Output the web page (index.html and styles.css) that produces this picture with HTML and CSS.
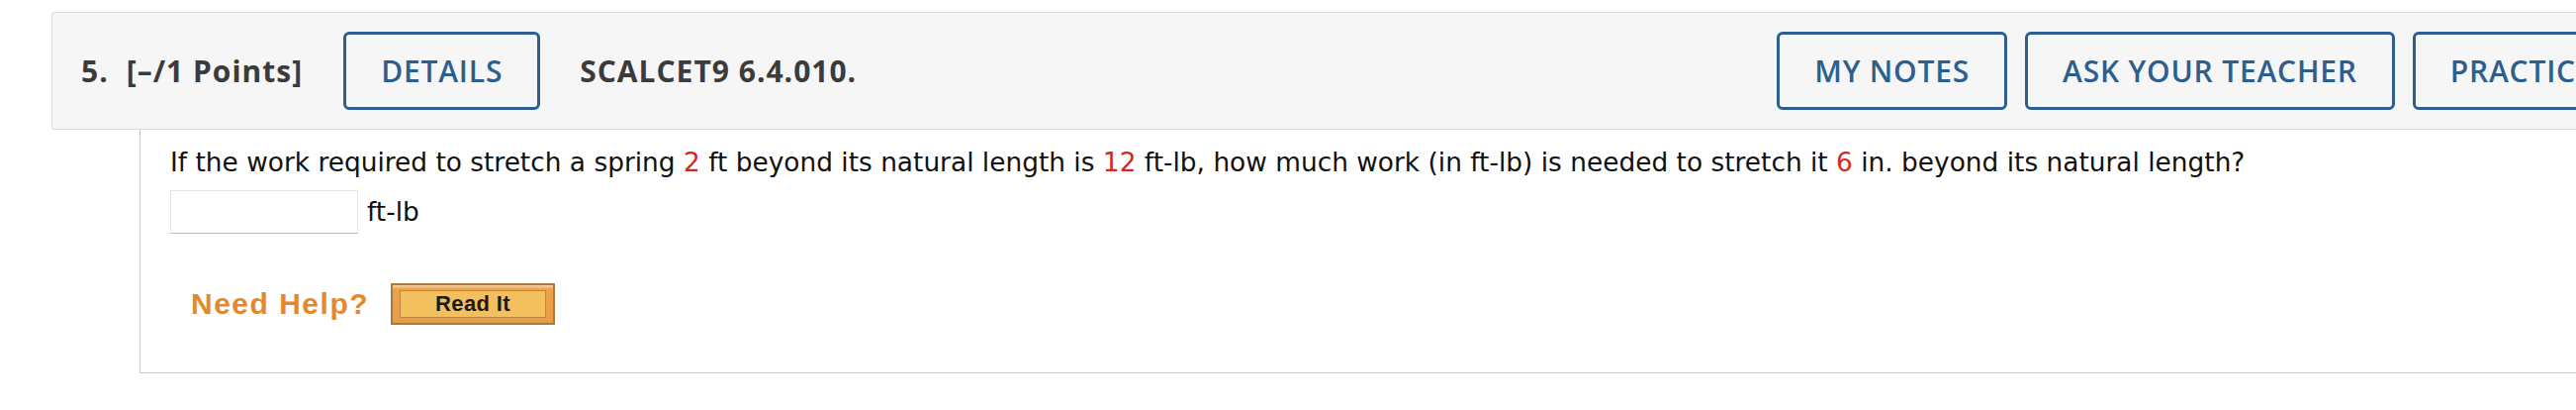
FILE: index.html
```html
<!DOCTYPE html>
<html lang="en">
<head>
    <meta charset="UTF-8">
    <meta name="viewport" content="width=device-width, initial-scale=1.0">
    <title>Question 5</title>
    <link rel="stylesheet" href="styles.css">
</head>
<body>
    <div class="question">
        <div class="q-header">
            <span class="q-num">5.</span>
            <span class="q-points">[&ndash;/1 Points]</span>
            <button class="q-btn">DETAILS</button>
            <span class="q-ref">SCALCET9 6.4.010.</span>
            <div class="q-actions">
                <button class="q-btn">MY NOTES</button>
                <button class="q-btn">ASK YOUR TEACHER</button>
                <button class="q-btn">PRACTICE ANOTHER</button>
            </div>
        </div>
        <div class="q-body">
            <p class="q-text">If the work required to stretch a spring <span class="val">2</span> ft beyond its natural length is <span class="val">12</span> ft-lb, how much work (in ft-lb) is needed to stretch it <span class="val">6</span> in. beyond its natural length?</p>
            <div class="answer-row">
                <input type="text" class="answer">
                <span class="unit">ft-lb</span>
            </div>
            <div class="help-row">
                <span class="need-help">Need Help?</span>
                <button class="read-it"><span>Read It</span></button>
            </div>
        </div>
    </div>
</body>
</html>
```

FILE: styles.css
```css
html, body {
    overflow: hidden;
}

body {
    margin: 0;
    background: #fff;
    font-family: "DejaVu Sans", Verdana, sans-serif;
}

.question {
    margin: 12px 0 0 52px;
    width: 2795px;
}

.q-header {
    display: flex;
    align-items: center;
    padding: 19px 30px 19px 29px;
    background-color: #f6f6f6;
    border: 1px solid #dcdcdc;
    border-radius: 3px;
    font-family: "Open Sans", sans-serif;
    font-size: 30px;
    font-weight: 700;
    letter-spacing: 1px;
    color: #3b3b3b;
}

.q-num {
    margin-right: 18px;
}

.q-points {
    margin-right: 41px;
}

.q-ref {
    margin-left: 40px;
}

.q-btn {
    box-sizing: border-box;
    height: 79px;
    padding: 0 35px;
    background: transparent;
    border: 3px solid #2c5f8e;
    border-radius: 6px;
    font-family: "Open Sans", sans-serif;
    font-size: 30px;
    font-weight: 600;
    letter-spacing: 0.8px;
    color: #2c5f8e;
    white-space: nowrap;
}

.q-actions {
    display: flex;
    gap: 18px;
    margin-left: auto;
}

.q-body {
    margin-left: 89px;
    padding: 17px 30px 48px 30px;
    border: 1px solid #c9c9c9;
    border-top: none;
}

.q-text {
    margin: 0;
    font-size: 26.4px;
    line-height: 32px;
    color: #111;
}

.val {
    color: #d12a1f;
}

.answer-row {
    display: flex;
    align-items: center;
    margin-top: 12px;
}

.answer {
    box-sizing: border-box;
    width: 190px;
    height: 44px;
    margin: 0;
    border: 1px solid #e4e4e4;
    border-bottom-color: #bdbdbd;
    background: #fff;
}

.unit {
    margin-left: 9px;
    font-size: 26.4px;
    line-height: 32px;
    color: #111;
}

.help-row {
    display: flex;
    align-items: center;
    margin-top: 50px;
    padding-left: 21px;
}

.need-help {
    font-family: "Liberation Sans", Arial, sans-serif;
    font-size: 30px;
    font-weight: 700;
    letter-spacing: 1.5px;
    color: #e3892c;
    margin-right: 22px;
}

.read-it {
    box-sizing: border-box;
    width: 166px;
    height: 42px;
    padding: 5px 7px;
    background: linear-gradient(to bottom, #f8d6a6 0, #eda14a 4px, #eb9d42 100%);
    border: 2px solid #a9793d;
    border-radius: 0;
    display: flex;
}

.read-it span {
    flex: 1;
    display: flex;
    align-items: center;
    justify-content: center;
    background-color: #f2c05e;
    border: 1px solid #b98846;
    font-family: "Liberation Sans", Arial, sans-serif;
    font-size: 22px;
    font-weight: 700;
    letter-spacing: 0.4px;
    color: #1a1a1a;
}
```
